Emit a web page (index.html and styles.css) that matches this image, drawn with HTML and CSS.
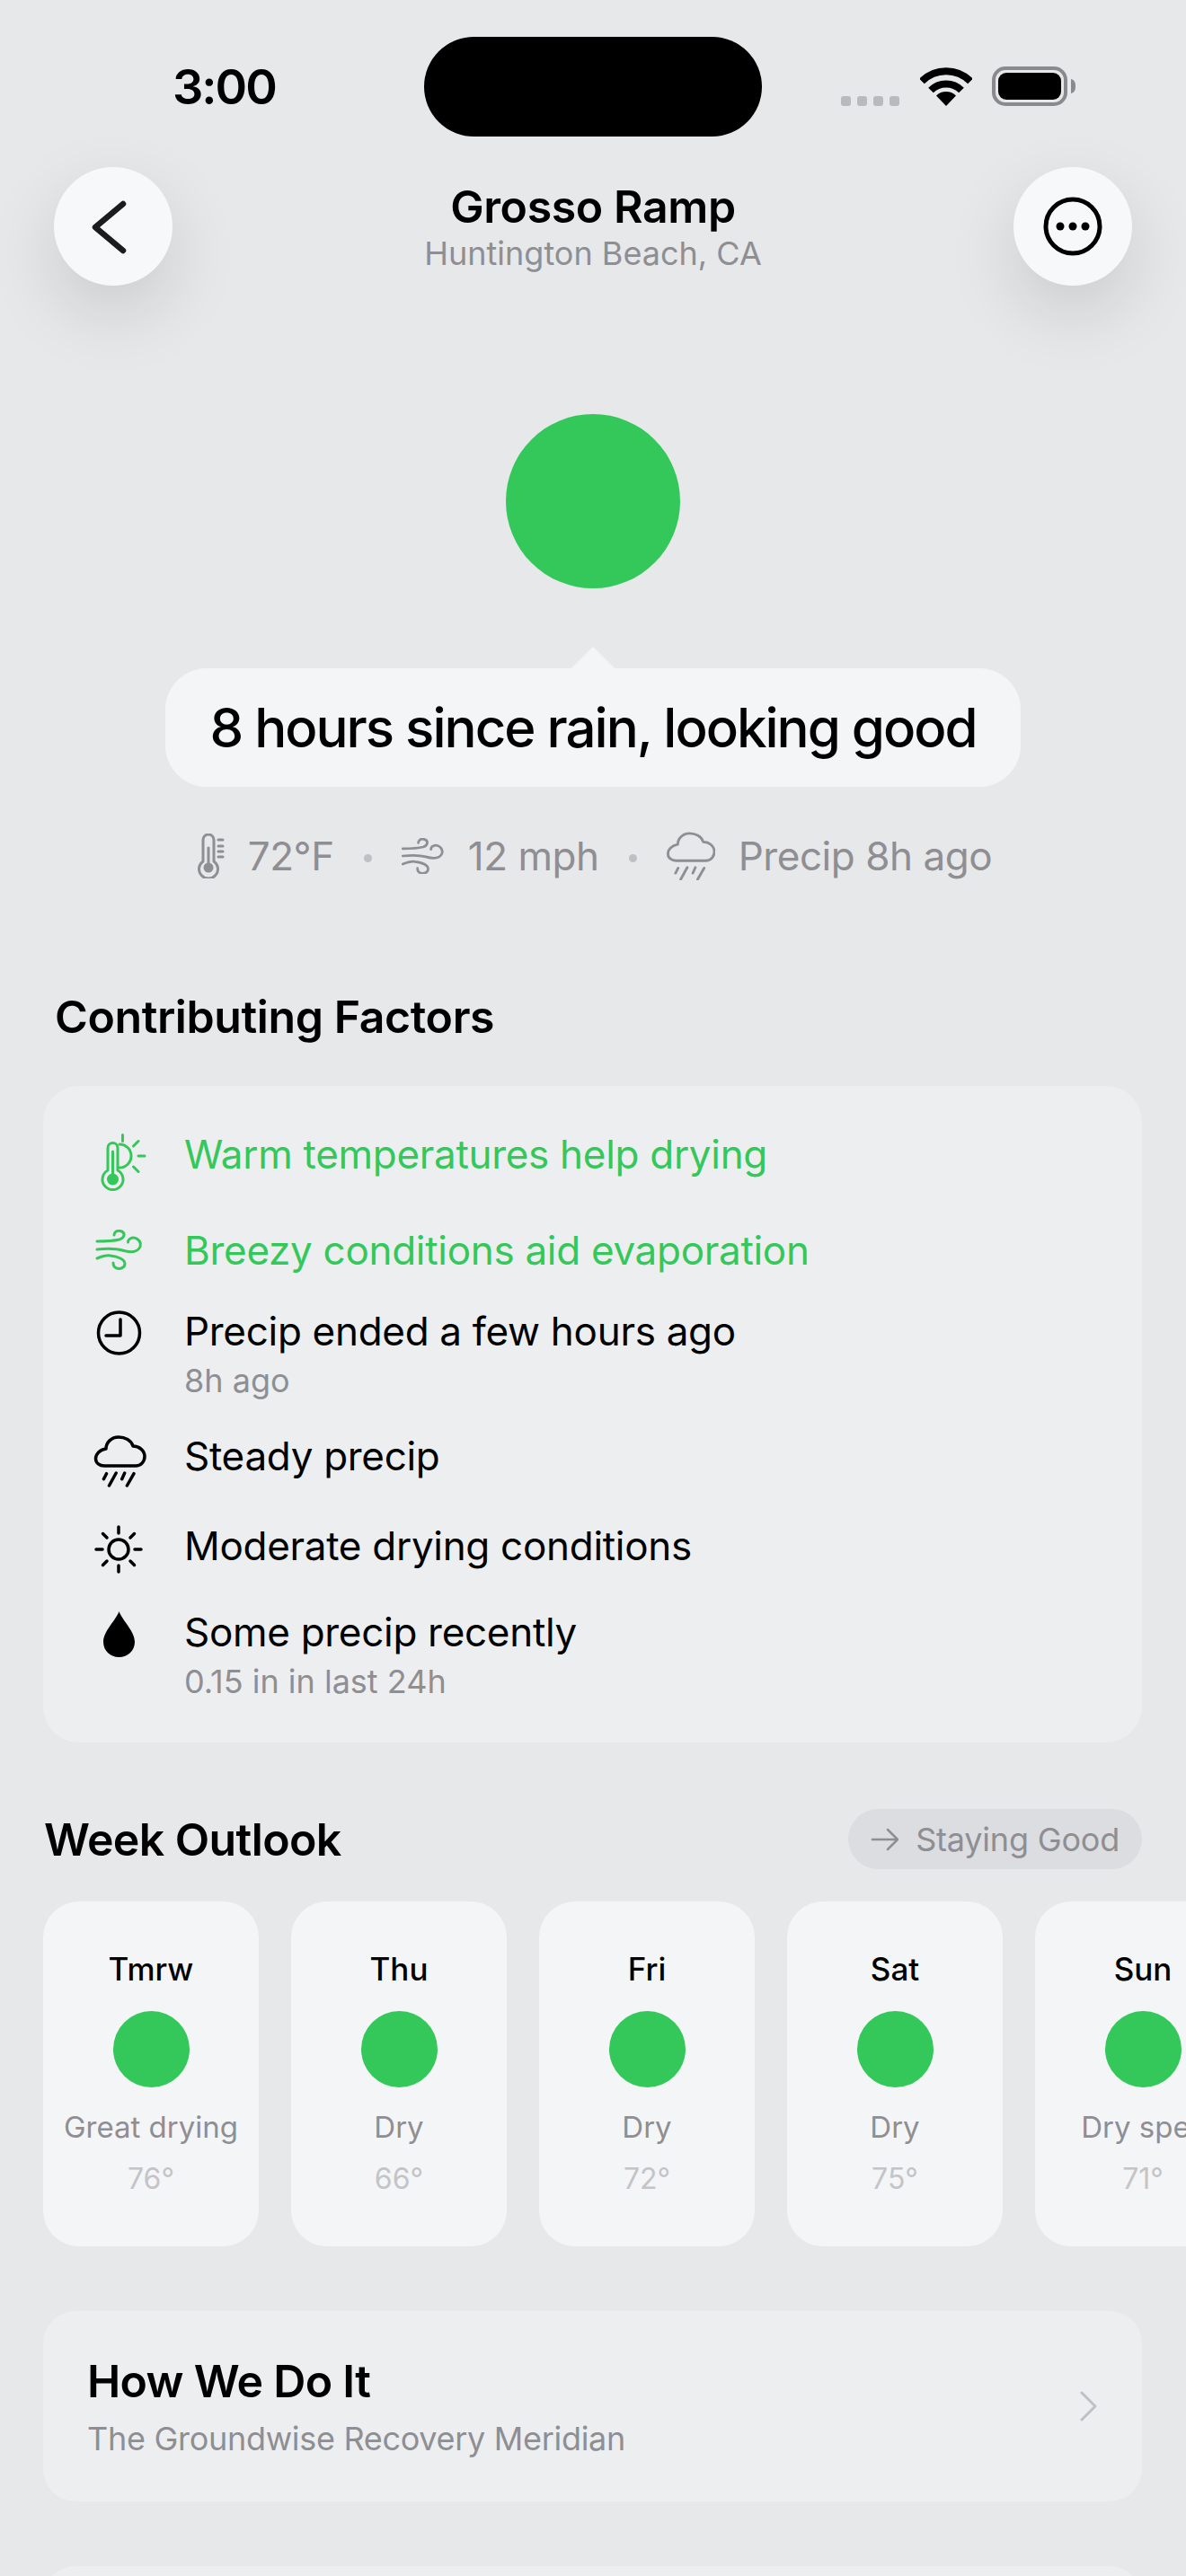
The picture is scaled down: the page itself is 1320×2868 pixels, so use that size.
FILE: index.html
```html
<!DOCTYPE html>
<html lang="en">

<head>
    <meta charset="UTF-8">
    <meta name="viewport" content="width=device-width, initial-scale=1.0">
    <title>Grosso Ramp</title>
    <link rel="stylesheet" href="styles.css">
</head>

<body>
    <div class="screen">
        <div class="status">
            <div class="time">3:00</div>
            <div class="island"></div>
            <div class="status-icons">
                <div class="signal"><span></span><span></span><span></span><span></span></div>
                <svg class="wifi" width="58" height="43" viewBox="0 0 58 43">
                    <path class="wifi-arc" d="M2 15.5 A38 38 0 0 1 56 15.5" />
                    <path class="wifi-arc" d="M12 25.5 A24 24 0 0 1 46 25.5" />
                    <path class="solid" d="M29 43 L18 31.5 A16 16 0 0 1 40 31.5 Z" />
                </svg>
                <svg class="battery" width="94" height="44" viewBox="0 0 94 44">
                    <rect class="battery-edge" x="2" y="2" width="80" height="40" rx="13" />
                    <rect class="solid" x="7" y="7" width="70" height="30" rx="9" />
                    <path class="battery-cap" d="M88 14 C92 15 93 18 93 22 C93 26 92 29 88 30 Z" />
                </svg>
            </div>
        </div>

        <div class="header">
            <button class="round-btn">
                <svg width="132" height="132" viewBox="0 0 132 132">
                    <path class="icon back" d="M77 41 L46 67 L77 93" />
                </svg>
            </button>
            <div class="title-block">
                <div class="title">Grosso Ramp</div>
                <div class="subtitle">Huntington Beach, CA</div>
            </div>
            <button class="round-btn">
                <svg width="132" height="132" viewBox="0 0 132 132">
                    <circle class="icon more" cx="66" cy="66" r="30" />
                    <circle class="solid" cx="52" cy="66" r="4.5" />
                    <circle class="solid" cx="66" cy="66" r="4.5" />
                    <circle class="solid" cx="80" cy="66" r="4.5" />
                </svg>
            </button>
        </div>

        <div class="hero">
            <div class="status-circle"></div>
            <div class="bubble">8 hours since rain, looking good</div>
            <div class="metrics">
                <svg class="metric-icon" width="30" height="50" viewBox="0 0 30 50">
                    <path class="icon" d="M6 31 V7 a6 6 0 0 1 12 0 V31 a10.5 10.5 0 1 1 -12 0 z" />
                    <circle class="solid" cx="12" cy="38" r="5.5" />
                    <path class="icon" d="M12 16 V36 M23 7 H28 M23 14 H28 M23 20 H28 M23 26 H28" />
                </svg>
                <span class="metric-text">72°F</span>
                <span class="metric-dot"></span>
                <svg class="metric-icon" width="48" height="40" viewBox="4 0 52 44">
                    <path class="icon" d="M5 13 C12 13 22 13 30 11 C36 9 37 3 31 1.5 C27 0.5 24 3 24 6" />
                    <path class="icon" d="M5 22 C15 21 26 21 33 23 C40 25 50 26 53 19 C55 12 47 7 42 10 C40 11 39.5 13 39.5 14" />
                    <path class="icon" d="M5 32 C10 30 15 28 20 29 C28 30 36 33 36 38 C36 43 30 44 27 43 C24 42 23 40 23 37" />
                </svg>
                <span class="metric-text">12 mph</span>
                <span class="metric-dot"></span>
                <svg class="metric-icon" width="54" height="54" viewBox="2 0 57 57">
                    <path class="icon" d="M13 34 H48 C54 34 58 29 58 23.5 C58 17 52 12 45 12 C43 5.5 36 2 29 2 C21 2 15 8 15 15 C8 16 3.5 21 3.5 26 C3.5 31 8 34 13 34 Z" />
                    <path class="icon" d="M15.5 42.7 L12.4 48.7 M26.2 42 L18.5 56 M35.7 42 L32.7 48.7 M46 42.7 L38.4 56" />
                </svg>
                <span class="metric-text">Precip 8h ago</span>
            </div>
        </div>

        <h2 class="factors-heading">Contributing Factors</h2>
        <div class="card factors">
            <div class="factor good">
                <svg class="factor-icon" width="60" height="66" viewBox="0 0 60 66">
                    <path class="icon" d="M17 41 V16 a5.5 5.5 0 0 1 11 0 V41 a11.5 11.5 0 1 1 -11 0 z" />
                    <circle class="solid" cx="22.5" cy="51" r="6.5" />
                    <path class="icon" d="M22.5 20 V46" />
                    <path class="icon" d="M30 12 A13 13 0 0 1 30 38" />
                    <path class="icon" d="M33.5 1.5 V8.5 M45.5 14 L51 8.5 M51 25 H58 M45.5 37 L51 42.5" />
                </svg>
                <div class="factor-text">Warm temperatures help drying</div>
            </div>
            <div class="factor good wind-row">
                <svg class="factor-icon" width="60" height="50" viewBox="0 0 60 50">
                    <path class="icon" d="M5 13 C12 13 22 13 30 11 C36 9 37 3 31 1.5 C27 0.5 24 3 24 6" />
                    <path class="icon" d="M5 22 C15 21 26 21 33 23 C40 25 50 26 53 19 C55 12 47 7 42 10 C40 11 39.5 13 39.5 14" />
                    <path class="icon" d="M5 32 C10 30 15 28 20 29 C28 30 36 33 36 38 C36 43 30 44 27 43 C24 42 23 40 23 37" />
                </svg>
                <div class="factor-text">Breezy conditions aid evaporation</div>
            </div>
            <div class="factor clock-row">
                <svg class="factor-icon" width="60" height="52" viewBox="0 0 60 52">
                    <circle class="icon heavy" cx="29.5" cy="25" r="23" />
                    <path class="icon heavy" d="M31 10 V28 H15" />
                </svg>
                <div>
                    <div class="factor-text">Precip ended a few hours ago</div>
                    <div class="factor-sub">8h ago</div>
                </div>
            </div>
            <div class="factor cloud-row">
                <svg class="factor-icon" width="60" height="58" viewBox="0 0 60 58">
                    <path class="icon heavy" d="M13 34 H48 C54 34 58 29 58 23.5 C58 17 52 12 45 12 C43 5.5 36 2 29 2 C21 2 15 8 15 15 C8 16 3.5 21 3.5 26 C3.5 31 8 34 13 34 Z" />
                    <path class="icon heavy" d="M15.5 42.7 L12.4 48.7 M26.2 42 L18.5 56 M35.7 42 L32.7 48.7 M46 42.7 L38.4 56" />
                </svg>
                <div class="factor-text">Steady precip</div>
            </div>
            <div class="factor sun-row">
                <svg class="factor-icon" width="60" height="54" viewBox="0 0 60 54">
                    <circle class="icon heavy" cx="29" cy="27" r="11" />
                    <path class="icon heavy" d="M29 2 V9 M29 45 V52 M4 27 H11 M47 27 H54 M11.5 9.5 L16 14 M46.5 9.5 L42 14 M11.5 44.5 L16 40 M46.5 44.5 L42 40" />
                </svg>
                <div class="factor-text">Moderate drying conditions</div>
            </div>
            <div class="factor drop-row">
                <svg class="factor-icon" width="60" height="52" viewBox="0 0 60 52">
                    <path class="solid" d="M29.5 0 C33 10 47 22 47 34 C47 44 39 51 29.5 51 C20 51 12 44 12 34 C12 22 26 10 29.5 0 Z" />
                </svg>
                <div>
                    <div class="factor-text">Some precip recently</div>
                    <div class="factor-sub">0.15 in in last 24h</div>
                </div>
            </div>
        </div>

        <div class="week-head">
            <h2 class="week-title">Week Outlook</h2>
            <div class="trend">
                <svg width="32" height="26" viewBox="0 0 32 26">
                    <path class="icon trend-arrow" d="M2 13 H29 M19 2 L30 13 L19 24" />
                </svg>
                <span>Staying Good</span>
            </div>
        </div>

        <div class="week-row">
            <div class="day">
                <div class="day-name">Tmrw</div>
                <div class="day-dot"></div>
                <div class="day-label">Great drying</div>
                <div class="day-temp">76°</div>
            </div>
            <div class="day">
                <div class="day-name">Thu</div>
                <div class="day-dot"></div>
                <div class="day-label">Dry</div>
                <div class="day-temp">66°</div>
            </div>
            <div class="day">
                <div class="day-name">Fri</div>
                <div class="day-dot"></div>
                <div class="day-label">Dry</div>
                <div class="day-temp">72°</div>
            </div>
            <div class="day">
                <div class="day-name">Sat</div>
                <div class="day-dot"></div>
                <div class="day-label">Dry</div>
                <div class="day-temp">75°</div>
            </div>
            <div class="day">
                <div class="day-name">Sun</div>
                <div class="day-dot"></div>
                <div class="day-label">Dry spell</div>
                <div class="day-temp">71°</div>
            </div>
        </div>

        <div class="card link-card">
            <div>
                <div class="link-title">How We Do It</div>
                <div class="link-sub">The Groundwise Recovery Meridian</div>
            </div>
            <svg class="link-chevron" width="20" height="34" viewBox="0 0 20 34">
                <path class="icon" d="M2 2 L17 17 L2 32" />
            </svg>
        </div>
        <div class="card link-card"></div>
    </div>
</body>

</html>
```

FILE: styles.css
```css
body {
    margin: 0;
    background: #e7e8ea;
    font-family: Inter, "Noto Sans", sans-serif;
    color: #000;
}

.screen {
    width: 1320px;
    height: 2868px;
    overflow: hidden;
}

/* Shared svg styles */
.icon {
    fill: none;
    stroke: currentColor;
    stroke-width: 3;
    stroke-linecap: round;
    stroke-linejoin: round;
}

.heavy {
    stroke-width: 3.5;
}

.solid {
    fill: currentColor;
    stroke: none;
}

/* Status bar */
.status {
    display: flex;
    padding: 41px 122px 0 192px;
    height: 111px;
}

.time {
    width: 280px;
    padding-top: 30px;
    font-size: 54px;
    line-height: 52px;
    font-weight: 600;
    letter-spacing: -2px;
}

.island {
    width: 376px;
    height: 111px;
    border-radius: 56px;
    background: #000;
}

.status-icons {
    display: flex;
    align-items: flex-end;
    margin-left: auto;
    padding-bottom: 34px;
}

.signal {
    display: flex;
    gap: 7px;
    margin-right: 23px;
}

.signal span {
    width: 11px;
    height: 11px;
    border-radius: 3px;
    background: #b9babd;
}

.wifi {
    margin-right: 22px;
}

.wifi-arc {
    fill: none;
    stroke: #000;
    stroke-width: 8;
}

.battery-edge {
    fill: none;
    stroke: #8a8a8e;
    stroke-width: 4;
}

.battery-cap {
    fill: #8a8a8e;
}

/* Header */
.header {
    display: flex;
    justify-content: space-between;
    align-items: center;
    margin-top: 34px;
    padding: 0 60px;
}

.round-btn {
    width: 132px;
    height: 132px;
    padding: 0;
    border: none;
    border-radius: 50%;
    background: #f7f8f9;
    box-shadow: 0 30px 80px rgba(0, 0, 0, 0.13);
    color: #000;
}

.round-btn svg {
    display: block;
}

.back {
    stroke-width: 6.5;
    color: #1c1c1e;
}

.more {
    stroke-width: 5;
}

.title-block {
    text-align: center;
}

.title {
    font-size: 50px;
    line-height: 56px;
    font-weight: 600;
    letter-spacing: -0.4px;
}

.subtitle {
    margin-top: 3px;
    font-size: 36px;
    line-height: 42px;
    color: #8e8e93;
}

/* Hero */
.hero {
    display: flex;
    flex-direction: column;
    align-items: center;
}

.status-circle {
    width: 194px;
    height: 194px;
    margin-top: 143px;
    border-radius: 50%;
    background: #34c85a;
}

.bubble {
    position: relative;
    box-sizing: border-box;
    width: 952px;
    height: 132px;
    margin-top: 89px;
    border-radius: 46px;
    background: #f4f5f7;
    font-size: 60px;
    line-height: 132px;
    font-weight: 500;
    letter-spacing: -2px;
    text-align: center;
}

.bubble::before {
    content: "";
    position: absolute;
    top: -24px;
    left: 452px;
    border-left: 24px solid transparent;
    border-right: 24px solid transparent;
    border-bottom: 24px solid #f4f5f7;
}

.metrics {
    display: flex;
    align-items: center;
    height: 54px;
    margin-top: 50px;
    margin-left: 4px;
    color: #8e8e93;
}

.metric-icon {
    flex: none;
}

.metric-text {
    margin-left: 26px;
    font-size: 44px;
    line-height: 54px;
    letter-spacing: -0.45px;
}

.metric-dot {
    width: 9px;
    height: 9px;
    margin: 4px 33px 0;
    border-radius: 50%;
    background: #bfc0c3;
}

/* Contributing factors */
.factors-heading {
    margin: 122px 0 0 61px;
    font-size: 50px;
    line-height: 60px;
    font-weight: 600;
    letter-spacing: -0.4px;
}

.card {
    margin: 0 49px 0 48px;
    border-radius: 40px;
    background: #edeef0;
}

.factors {
    margin-top: 47px;
    padding: 50px 0 47px 55px;
}

.factor {
    display: flex;
    align-items: flex-start;
    gap: 42px;
}

.factor-icon {
    flex: none;
    margin-top: 3px;
}

.factor-text {
    font-size: 44px;
    line-height: 52px;
    letter-spacing: -0.3px;
}

.factor-sub {
    margin-top: 8px;
    font-size: 36px;
    line-height: 42px;
    color: #8e8e93;
}

.good {
    color: #34c85a;
}

.wind-row {
    margin-top: 38px;
}

.clock-row {
    margin-top: 37px;
}

.cloud-row {
    margin-top: 37px;
}

.sun-row {
    margin-top: 39px;
}

.drop-row {
    margin-top: 39px;
}

/* Week outlook */
.week-head {
    display: flex;
    justify-content: space-between;
    align-items: center;
    margin-top: 74px;
    padding: 0 49px;
}

.week-title {
    margin: 0;
    font-size: 50px;
    line-height: 60px;
    font-weight: 600;
    letter-spacing: -0.6px;
}

.trend {
    display: flex;
    align-items: center;
    gap: 18px;
    height: 67px;
    padding: 0 25px;
    border-radius: 34px;
    background: #dcdde0;
    font-size: 36px;
    letter-spacing: -0.2px;
    color: #8e8e93;
}

.trend-arrow {
    stroke-width: 2.5;
}

.week-row {
    display: flex;
    gap: 36px;
    margin-top: 36px;
    padding-left: 48px;
}

.day {
    flex: none;
    width: 240px;
    height: 384px;
    box-sizing: border-box;
    padding-top: 53px;
    border-radius: 40px;
    background: #f4f5f7;
    text-align: center;
    white-space: nowrap;
}

.day-name {
    font-size: 35px;
    line-height: 44px;
    font-weight: 500;
}

.day-dot {
    width: 85px;
    height: 85px;
    margin: 25px auto 0;
    border-radius: 50%;
    background: #34c85a;
}

.day-label {
    margin-top: 24px;
    font-size: 33px;
    line-height: 40px;
    color: #8e8e93;
}

.day-temp {
    margin-top: 18px;
    font-size: 32px;
    line-height: 40px;
    color: #c4c4c8;
}

/* Link cards */
.link-card {
    display: flex;
    justify-content: space-between;
    align-items: center;
    box-sizing: border-box;
    height: 212px;
    margin-top: 72px;
    padding: 0 49px;
    border-radius: 36px;
}

.link-title {
    font-size: 50px;
    line-height: 60px;
    font-weight: 600;
    letter-spacing: -0.7px;
}

.link-sub {
    margin-top: 12px;
    font-size: 36px;
    line-height: 44px;
    letter-spacing: -0.3px;
    color: #8e8e93;
}

.link-chevron {
    color: #c0c0c5;
}
```
